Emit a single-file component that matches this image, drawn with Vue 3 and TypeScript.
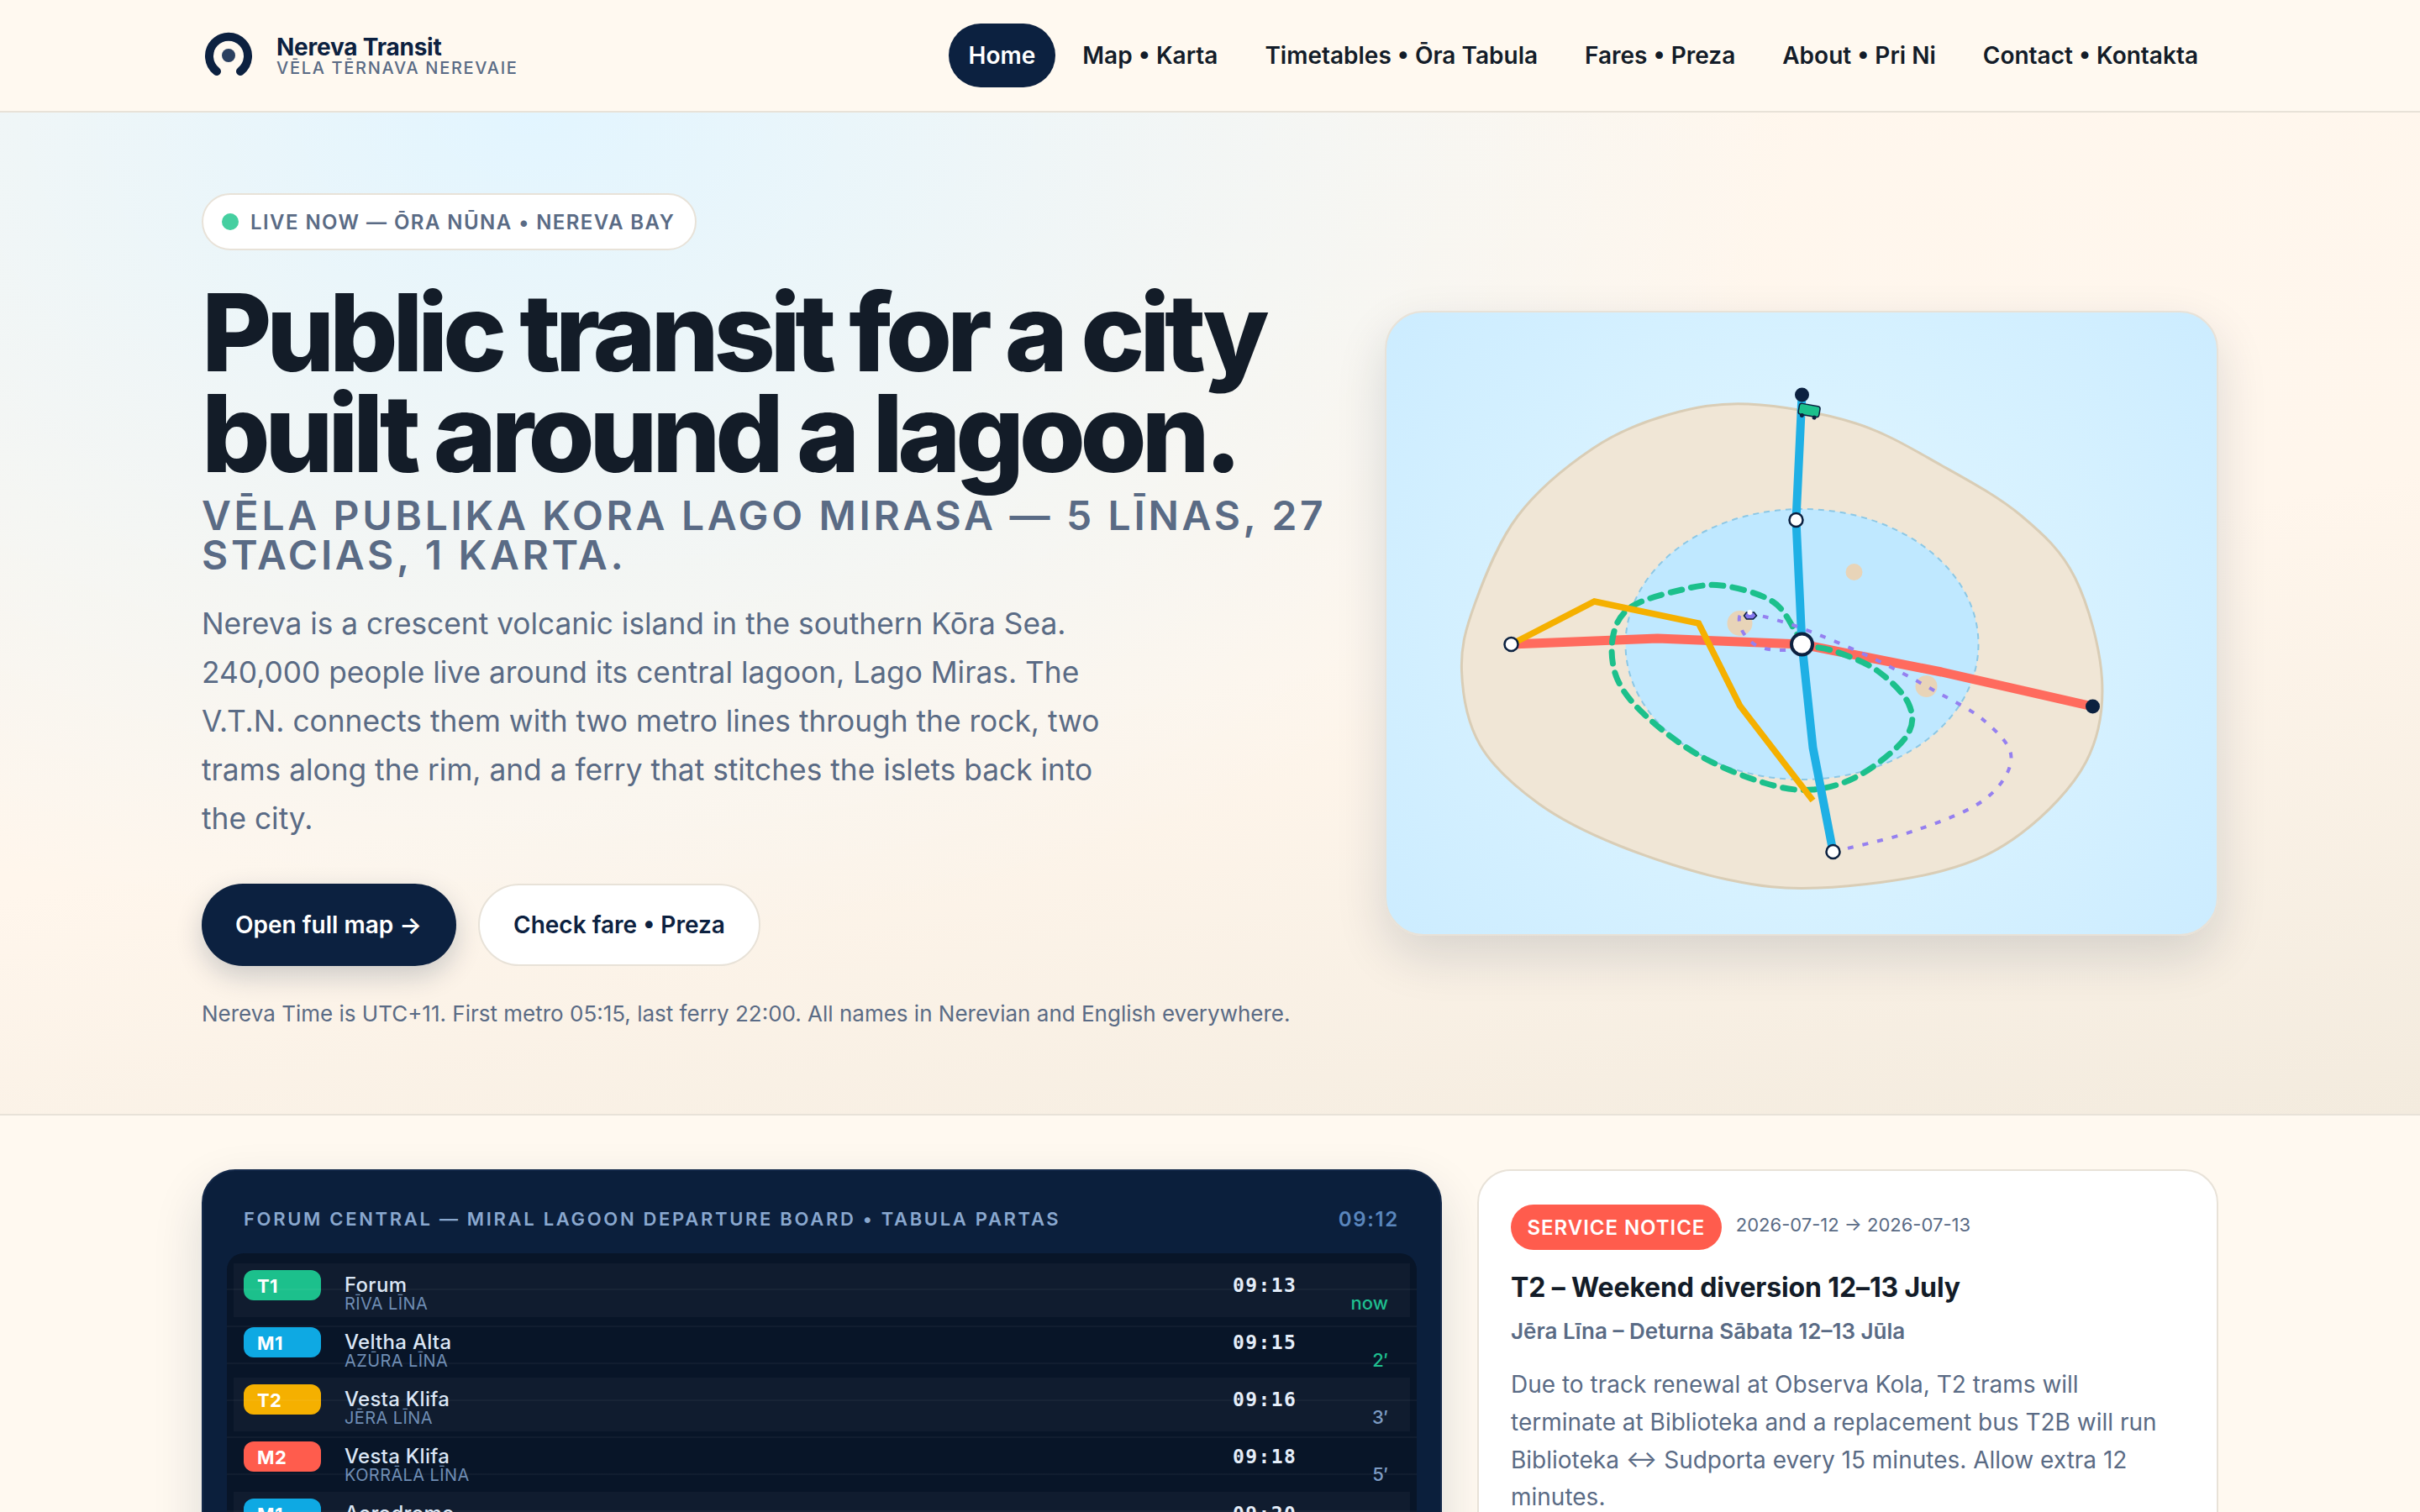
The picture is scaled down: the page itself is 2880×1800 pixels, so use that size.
<script setup lang="ts">
type Pt = [number, number]

interface Departure {
  line: string
  color: string
  name: string
  sub: string
  time: string
  eta: string
  soon: boolean
}

const navLinks = ['Home', 'Map • Karta', 'Timetables • Ōra Tabula', 'Fares • Preza', 'About • Pri Ni', 'Contact • Kontakta']

const departures: Departure[] = [
  { line: 'T1', color: '#1cc08c', name: 'Forum', sub: 'Rīva Līna', time: '09:13', eta: 'now', soon: true },
  { line: 'M1', color: '#0ea9e3', name: 'Veltha Alta', sub: 'Azūra Līna', time: '09:15', eta: '2′', soon: true },
  { line: 'T2', color: '#f5b000', name: 'Vesta Klifa', sub: 'Jēra Līna', time: '09:16', eta: '3′', soon: false },
  { line: 'M2', color: '#ff5c4d', name: 'Vesta Klifa', sub: 'Korrāla Līna', time: '09:18', eta: '5′', soon: false },
  { line: 'M1', color: '#0ea9e3', name: 'Aerodromo', sub: 'Azūra Līna', time: '09:20', eta: '7′', soon: false },
]

const islandPts: Pt[] = [
  [432, 110], [560, 133], [662, 183], [757, 243], [821, 317], [853, 437], [834, 536], [757, 621], [662, 666], [515, 686],
  [407, 676], [279, 636], [183, 586], [113, 516], [91, 427], [107, 347], [158, 243], [247, 163], [336, 123],
]

const tramLoopPts: Pt[] = [
  [496, 396], [489, 382], [461, 345], [400, 326], [349, 332], [292, 352], [271, 387], [276, 437], [311, 482], [375, 529],
  [451, 561], [509, 569], [566, 551], [620, 506], [623, 467], [585, 427], [534, 404],
]

const ferryPts: Pt[] = [
  [533, 643], [630, 618], [713, 581], [745, 531], [713, 487], [655, 452], [579, 412], [496, 377], [438, 360], [422, 362],
  [426, 382], [445, 399], [477, 403], [496, 396],
]

// catmull-rom through the points, turned into cubic segments
function curve(pts: Pt[], closed: boolean): string {
  const n = pts.length
  const at = (i: number): Pt => (closed ? pts[(i + n) % n] : pts[Math.max(0, Math.min(n - 1, i))])
  let d = `M${pts[0][0]} ${pts[0][1]}`
  const last = closed ? n : n - 1
  for (let i = 0; i < last; i++) {
    const [p0, p1, p2, p3] = [at(i - 1), at(i), at(i + 1), at(i + 2)]
    const c1x = p1[0] + (p2[0] - p0[0]) / 6
    const c1y = p1[1] + (p2[1] - p0[1]) / 6
    const c2x = p2[0] - (p3[0] - p1[0]) / 6
    const c2y = p2[1] - (p3[1] - p1[1]) / 6
    d += ` C${c1x.toFixed(1)} ${c1y.toFixed(1)} ${c2x.toFixed(1)} ${c2y.toFixed(1)} ${p2[0]} ${p2[1]}`
  }
  return d + (closed ? ' Z' : '')
}

const islandPath = curve(islandPts, true)
const tramLoopPath = curve(tramLoopPts, true)
const ferryPath = curve(ferryPts, false)
</script>

<template>
  <div class="page">
    <header class="topbar">
      <div class="wrap topbar-inner">
        <div class="brand">
          <svg class="logo" viewBox="0 0 64 64" width="64" height="64" aria-hidden="true">
            <path d="M18 51 A23 23 0 1 1 46 51" fill="none" stroke="#0c2140" stroke-width="10" stroke-linecap="round" />
            <circle cx="32" cy="32" r="8" fill="#2a3f5f" />
          </svg>
          <div class="brand-text">
            <span class="brand-name">Nereva Transit</span>
            <span class="brand-tag">Vēla Tērnava Nerevaie</span>
          </div>
        </div>
        <nav class="nav">
          <a v-for="(link, idx) in navLinks" :key="link" class="nav-link" :class="{ active: idx === 0 }">{{ link }}</a>
        </nav>
      </div>
    </header>

    <section class="hero">
      <div class="wrap hero-grid">
        <div class="hero-copy">
          <div class="live-pill"><span class="live-dot"></span>Live now — Ōra Nūna • Nereva Bay</div>
          <h1>Public transit for a city built around a lagoon.</h1>
          <p class="hero-sub">Vēla Publika Kora Lago Mirasa — 5 līnas, 27 stacias, 1 karta.</p>
          <p class="hero-lead">
            Nereva is a crescent volcanic island in the southern Kōra Sea. 240,000 people live around its central lagoon,
            Lago Miras. The V.T.N. connects them with two metro lines through the rock, two trams along the rim, and a
            ferry that stitches the islets back into the city.
          </p>
          <div class="hero-actions">
            <a class="btn btn-primary">Open full map →</a>
            <a class="btn btn-ghost">Check fare • Preza</a>
          </div>
          <p class="hero-note">Nereva Time is UTC+11. First metro 05:15, last ferry 22:00. All names in Nerevian and English everywhere.</p>
        </div>

        <div class="map-card">
          <svg viewBox="1.5 1 988 740" class="map-svg" aria-label="Network map of Nereva">
            <path :d="islandPath" fill="#f0e6d6" stroke="#d9cdb6" stroke-width="3" />
            <ellipse cx="496" cy="396" rx="210" ry="161" fill="#bfe8ff" stroke="#8cc8e6" stroke-width="2" stroke-dasharray="7 6" />
            <circle cx="558" cy="310" r="10" fill="#e8d4b8" />
            <circle cx="422" cy="371" r="15" fill="#e8d4b8" />
            <circle cx="644" cy="446" r="13" fill="#e8d4b8" />

            <polyline points="150,396 324,389 496,396 662,429 842,470" fill="none" stroke="#ff6b5e" stroke-width="11" stroke-linejoin="round" />
            <path :d="tramLoopPath" fill="none" stroke="#1cc08c" stroke-width="7" stroke-dasharray="14 11" stroke-linecap="round" />
            <polyline points="496,99 489,248 496,396 509,519 533,643" fill="none" stroke="#1fb0e5" stroke-width="10" stroke-linejoin="round" />
            <polyline points="150,396 249,345 373,371 422,469 509,582" fill="none" stroke="#f5b000" stroke-width="7.5" />
            <path :d="ferryPath" fill="none" stroke="#9580f0" stroke-width="4" stroke-dasharray="7 11" />

            <circle cx="496" cy="396" r="12.5" fill="#fff" stroke="#0c2140" stroke-width="4" />
            <circle cx="489" cy="248" r="8" fill="#fff" stroke="#0c2140" stroke-width="2.5" />
            <circle cx="150" cy="396" r="8" fill="#fff" stroke="#0c2140" stroke-width="2.5" />
            <circle cx="533" cy="643" r="8" fill="#fff" stroke="#0c2140" stroke-width="2.5" />
            <circle cx="496" cy="99" r="8.5" fill="#0c2140" />
            <circle cx="842" cy="470" r="8.5" fill="#0c2140" />

            <g transform="rotate(10 505 118)">
              <rect x="492" y="111" width="25" height="13" rx="3" fill="#1cc08c" stroke="#0c2140" stroke-width="1.5" />
              <circle cx="497" cy="125" r="2.5" fill="#0c2140" />
              <circle cx="512" cy="125" r="2.5" fill="#0c2140" />
            </g>
            <polygon points="427,362 430,358 439,358 442,362 438,366 430,366" fill="#8577ee" stroke="#0c2140" stroke-width="1.5" />
            <circle cx="434" cy="358" r="3" fill="#fff" />
          </svg>
        </div>
      </div>
    </section>

    <section class="wrap board-grid">
      <div class="board">
        <div class="board-head">
          <span class="board-title">Forum Central — Miral Lagoon Departure Board • Tabula Partas</span>
          <span class="board-clock">09:12</span>
        </div>
        <div class="board-table">
          <div v-for="row in departures" :key="row.line + row.time" class="board-row">
            <span class="line-badge" :style="{ background: row.color }">{{ row.line }}</span>
            <div class="dest">
              <span class="dest-name">{{ row.name }}</span>
              <span class="dest-sub">{{ row.sub }}</span>
            </div>
            <span class="dep-time">{{ row.time }}</span>
            <span class="dep-eta" :class="{ soon: row.soon }">{{ row.eta }}</span>
          </div>
        </div>
      </div>

      <article class="notice">
        <div class="notice-top">
          <span class="notice-badge">Service notice</span>
          <span class="notice-date">2026-07-12 → 2026-07-13</span>
        </div>
        <h3>T2 – Weekend diversion 12–13 July</h3>
        <p class="notice-sub">Jēra Līna – Deturna Sābata 12–13 Jūla</p>
        <p class="notice-body">
          Due to track renewal at Observa Kola, T2 trams will terminate at Biblioteka and a replacement bus T2B will run
          Biblioteka ↔ Sudporta every 15 minutes. Allow extra 12 minutes.
        </p>
      </article>
    </section>
  </div>
</template>

<style>
html,
body {
  margin: 0;
  background: #fff9f0;
  overflow: hidden;
}
</style>

<style scoped>
.page {
  font-family: Inter, "Noto Sans", sans-serif;
  color: #131c28;
  background: #fff9f0;
  min-height: 1800px;
}

.wrap {
  width: 2400px;
  margin: 0 auto;
}

.topbar {
  height: 134px;
  box-sizing: border-box;
  border-bottom: 2px solid #e8e2d8;
  background: #fff9f0;
}

.topbar-inner {
  height: 132px;
  display: flex;
  align-items: center;
  justify-content: space-between;
}

.brand {
  display: flex;
  align-items: center;
  gap: 25px;
}

.logo {
  display: block;
}

.brand-text {
  display: flex;
  flex-direction: column;
  padding-top: 2px;
}

.brand-name {
  font-size: 28px;
  line-height: 27px;
  font-weight: 700;
  letter-spacing: -0.008em;
  color: #0c2140;
}

.brand-tag {
  font-size: 20px;
  line-height: 22px;
  font-weight: 500;
  letter-spacing: 0.085em;
  text-transform: uppercase;
  color: #5a6b85;
}

.nav {
  display: flex;
  align-items: center;
  gap: 8px;
}

.nav-link {
  height: 76px;
  padding: 0 24px;
  display: flex;
  align-items: center;
  border-radius: 38px;
  font-size: 28px;
  font-weight: 600;
  white-space: nowrap;
}

.nav-link.active {
  background: #0c2140;
  color: #fff;
}

.hero {
  height: 1194px;
  box-sizing: border-box;
  padding-top: 96px;
  border-bottom: 2px solid #e8e2d8;
  background:
    radial-gradient(ellipse 1500px 1000px at 22% 0%, #e2f5ff 0%, rgba(226, 245, 255, 0.5) 45%, rgba(226, 245, 255, 0) 100%),
    linear-gradient(170deg, #fff7ee 0%, #fff6ec 55%, #f3ebde 100%);
}

.hero-grid {
  display: grid;
  grid-template-columns: 1344px 992px;
  gap: 64px;
  align-items: start;
}

.live-pill {
  display: inline-flex;
  align-items: center;
  gap: 14px;
  height: 68px;
  box-sizing: border-box;
  padding: 0 24px 0 22px;
  border: 2px solid #e8e2d8;
  border-radius: 34px;
  background: #fff;
  font-size: 24px;
  font-weight: 600;
  letter-spacing: 0.06em;
  text-transform: uppercase;
  color: #5a6b85;
}

.live-dot {
  width: 20px;
  height: 20px;
  border-radius: 50%;
  background: #45cfa0;
}

h1 {
  margin: 38px 0 0;
  max-width: 1300px;
  font-size: 128px;
  line-height: 120px;
  font-weight: 800;
  letter-spacing: -0.05em;
  color: #131c28;
}

.hero-sub {
  margin: 15px 0 0;
  font-size: 48px;
  line-height: 46.5px;
  font-weight: 600;
  letter-spacing: 0.077em;
  text-transform: uppercase;
  color: #5a6b85;
}

.hero-lead {
  margin: 30px 0 0;
  max-width: 1080px;
  font-size: 35.3px;
  line-height: 58px;
  color: #5a6b85;
}

.hero-actions {
  display: flex;
  gap: 26px;
  margin-top: 48px;
}

.btn {
  height: 98px;
  box-sizing: border-box;
  display: flex;
  align-items: center;
  padding: 0 40px;
  border-radius: 49px;
  font-size: 28px;
  font-weight: 600;
}

.btn-primary {
  padding: 0 41px 0 40px;
  background: #0c2140;
  color: #fff;
  box-shadow: 0 12px 32px rgba(12, 33, 64, 0.2);
}

.btn-ghost {
  background: #fff;
  color: #0c2140;
  border: 2px solid #e8e2d8;
}

.hero-note {
  margin: 36px 0 0;
  font-size: 26px;
  line-height: 42px;
  color: #5a6b85;
}

.map-card {
  margin-top: 140px;
  width: 992px;
  height: 744px;
  box-sizing: border-box;
  border: 2px solid #e8e2d8;
  border-radius: 46px;
  overflow: hidden;
  background: radial-gradient(circle at 50% 50%, #e2f6ff 0%, #d6f1ff 55%, #ccecff 100%);
  box-shadow: 0 24px 60px rgba(12, 33, 64, 0.14);
}

.map-svg {
  display: block;
  width: 100%;
  height: 100%;
}

.board-grid {
  display: grid;
  grid-template-columns: 1476px 882px;
  gap: 42px;
  align-items: start;
  padding-top: 64px;
}

.board {
  box-sizing: border-box;
  padding: 0 28px 28px;
  border: 2px solid #14294a;
  border-radius: 40px;
  background: #0b1f3c;
  box-shadow: 0 24px 60px rgba(12, 33, 64, 0.14);
}

.board-head {
  height: 98px;
  box-sizing: border-box;
  padding: 16px 21px 0 20px;
  display: flex;
  align-items: center;
  justify-content: space-between;
}

.board-title {
  font-size: 22px;
  font-weight: 600;
  letter-spacing: 0.122em;
  text-transform: uppercase;
  color: #8aa8cf;
}

.board-clock {
  font-size: 24px;
  font-weight: 600;
  letter-spacing: 0.07em;
  color: #5a86bd;
}

.board-table {
  position: relative;
  padding: 12px 8px;
  border-radius: 20px;
  background: #081528;
  overflow: hidden;
}

.board-table::after {
  content: "";
  position: absolute;
  inset: 0;
  pointer-events: none;
  background: repeating-linear-gradient(to bottom, transparent 0, transparent 42px, rgba(255, 255, 255, 0.035) 42px, rgba(255, 255, 255, 0.035) 44px);
}

.board-row {
  height: 64px;
  margin-bottom: 4px;
  box-sizing: border-box;
  padding: 8px 26px 0 12px;
  display: grid;
  grid-template-columns: 92px 1fr 76px 81px;
  column-gap: 28px;
  align-items: start;
}

.board-row:nth-child(odd) {
  background: #101c2f;
}

.line-badge {
  height: 36px;
  padding-left: 16px;
  border-radius: 12px;
  font-size: 22px;
  line-height: 38px;
  font-weight: 700;
  letter-spacing: 0.02em;
  color: #fff;
}

.dest {
  display: flex;
  flex-direction: column;
  padding-top: 5.5px;
  height: 48px;
}

.dest-name {
  font-size: 24px;
  line-height: 24px;
  font-weight: 500;
  letter-spacing: 0.012em;
  color: #dbe6f5;
}

.dest-sub {
  font-size: 20px;
  line-height: 20px;
  letter-spacing: 0.02em;
  text-transform: uppercase;
  color: #6f8db4;
}

.dep-time {
  font-family: monospace;
  font-size: 23px;
  line-height: 37px;
  font-weight: 600;
  letter-spacing: 0.06em;
  white-space: nowrap;
  color: #e4edf9;
}

.dep-eta {
  padding-top: 21px;
  font-size: 22px;
  line-height: 36px;
  font-weight: 500;
  text-align: right;
  color: #7e9cc4;
}

.dep-eta.soon {
  color: #1fbf8f;
}

.notice {
  box-sizing: border-box;
  padding: 40px 38px;
  border: 2px solid #e8e2d8;
  border-radius: 40px;
  background: #fff;
}

.notice-top {
  display: flex;
  align-items: flex-start;
  gap: 17px;
}

.notice-badge {
  height: 54px;
  padding: 0 19.5px;
  display: flex;
  align-items: center;
  border-radius: 27px;
  background: #ff5c4d;
  font-size: 24px;
  font-weight: 600;
  letter-spacing: 0.04em;
  text-transform: uppercase;
  color: #fff;
}

.notice-date {
  font-size: 22px;
  line-height: 48px;
  color: #5a6b85;
}

h3 {
  margin: 24px 0 0;
  font-size: 32px;
  line-height: 42px;
  font-weight: 700;
  letter-spacing: -0.004em;
  color: #131c28;
}

.notice-sub {
  margin: 12px 0 0;
  font-size: 26px;
  line-height: 38px;
  font-weight: 600;
  color: #5a6b85;
}

.notice-body {
  margin: 22px 0 0;
  font-size: 28px;
  line-height: 44.8px;
  color: #5a6b85;
}
</style>
